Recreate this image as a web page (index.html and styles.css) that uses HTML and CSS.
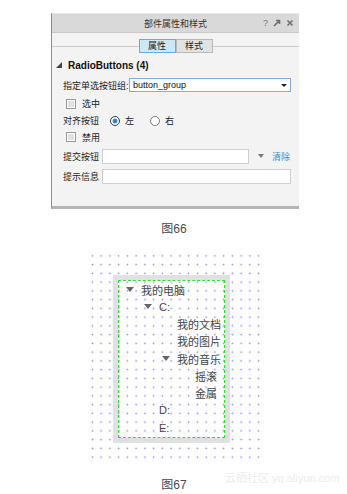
FILE: index.html
```html
<!DOCTYPE html>
<html lang="zh">
<head>
    <meta charset="UTF-8">
    <title>部件属性和样式</title>
    <link rel="stylesheet" href="styles.css">
</head>
<body>
<div class="page">
    <!-- 图66: 属性面板 -->
    <div class="panel">
        <div class="panel-title">
            <span class="title-text">部件属性和样式</span>
            <div class="title-icons">
                <span class="t-help">?</span>
                <svg width="8" height="8" viewBox="0 0 8 8"><path d="M1 7 L6 2 M3 1.5 H6.5 V5" stroke="#6f6f6f" stroke-width="1.6" fill="none"/></svg>
                <svg width="8" height="8" viewBox="0 0 8 8"><path d="M1.5 1.5 L6.5 6.5 M6.5 1.5 L1.5 6.5" stroke="#6f6f6f" stroke-width="1.6" fill="none"/></svg>
            </div>
        </div>

        <div class="tabs">
            <span class="tab active">属性</span>
            <span class="tab">样式</span>
        </div>

        <div class="section-head"><span class="corner"></span>RadioButtons (4)</div>

        <div class="row row-select">
            <span class="label">指定单选按钮组:</span>
            <div class="select">button_group<span class="select-arrow"></span></div>
        </div>

        <div class="row row-check">
            <span class="checkbox"></span><span>选中</span>
        </div>

        <div class="row row-radio">
            <span class="label">对齐按钮</span>
            <span class="radio checked"></span><span class="radio-text">左</span>
            <span class="radio"></span><span class="radio-text">右</span>
        </div>

        <div class="row row-check2">
            <span class="checkbox"></span><span>禁用</span>
        </div>

        <div class="row row-input">
            <span class="label">提交按钮</span>
            <div class="input short"></div>
            <span class="combo-arrow"></span>
            <span class="link">清除</span>
        </div>

        <div class="row row-input">
            <span class="label">提示信息</span>
            <div class="input"></div>
        </div>
    </div>
    <div class="caption cap66">图66</div>

    <!-- 图67: 树形控件 -->
    <div class="canvas">
        <div class="tree-frame">
            <div class="tree">
                <div class="node lv0"><span class="caret open"></span>我的电脑</div>
                <div class="node lv1"><span class="caret open"></span>C:</div>
                <div class="node lv2"><span class="caret"></span>我的文档</div>
                <div class="node lv2"><span class="caret"></span>我的图片</div>
                <div class="node lv2"><span class="caret open"></span>我的音乐</div>
                <div class="node lv3"><span class="caret"></span>摇滚</div>
                <div class="node lv3"><span class="caret"></span>金属</div>
                <div class="node lv1"><span class="caret"></span>D:</div>
                <div class="node lv1"><span class="caret"></span>E:</div>
            </div>
        </div>
    </div>
    <div class="caption cap67">图67</div>
    <div class="watermark">云栖社区 yq.aliyun.com</div>
</div>
</body>
</html>
```

FILE: styles.css
```css
* {
    margin: 0;
    padding: 0;
    box-sizing: border-box;
}

body {
    font-family: 'Liberation Sans', 'Noto Sans CJK SC', sans-serif;
    background: #ffffff;
    color: #333;
}

.page {
    position: relative;
    width: 347px;
    height: 494px;
    padding-top: 13px;
    overflow: hidden;
}

/* 面板 */
.panel {
    width: 248px;
    margin-left: 51px;
    background: #f3f3f3;
    border-left: 1px solid #8c8c8c;
    border-bottom: 3px solid #b4b4b4;
    padding-bottom: 20px;
    font-size: 9px;
    color: #222;
}

.panel-title {
    display: grid;
    grid-template-columns: 1fr auto 1fr;
    align-items: center;
    height: 20px;
    background: #d9d9d9;
    border-top: 1px solid #e9e9e9;
    border-bottom: 1px solid #c9c9c9;
}

.title-text {
    grid-column: 2;
    color: #333;
}

.title-icons {
    justify-self: end;
    display: flex;
    align-items: center;
    gap: 5px;
    padding-right: 5px;
}

.t-help {
    color: #777;
    font-size: 9px;
}

.tabs {
    display: flex;
    justify-content: center;
    margin-top: 6px;
    height: 14px;
    background: linear-gradient(#cccccc, #cccccc) center / 100% 1px no-repeat;
}

.tab {
    width: 37px;
    height: 14px;
    line-height: 12px;
    text-align: center;
    background: #e2e2e2;
    border: 1px solid #b9b9b9;
}

.tab.active {
    background: #cce8f8;
    border-color: #5fb0e6;
}

.section-head {
    display: flex;
    align-items: center;
    height: 14px;
    margin-top: 5px;
    padding-left: 4px;
    font-size: 10px;
    font-weight: bold;
    color: #111;
}

.corner {
    width: 0;
    height: 0;
    border-left: 6px solid transparent;
    border-bottom: 6px solid #444;
    margin-right: 6px;
}

.row {
    display: flex;
    align-items: center;
    padding-left: 11px;
    padding-right: 8px;
}

.label {
    color: #222;
}

.row-select {
    margin-top: 4px;
    height: 18px;
}

.row-select .label {
    width: 66px;
}

.select {
    position: relative;
    flex: 1;
    height: 14px;
    line-height: 12px;
    padding-left: 3px;
    background: #fff;
    border: 1px solid #86acd8;
    color: #111;
}

.select-arrow {
    position: absolute;
    right: 3px;
    top: 5px;
    border-left: 3px solid transparent;
    border-right: 3px solid transparent;
    border-top: 3px solid #222;
}

.row-check {
    height: 19px;
    padding-left: 14px;
}

.row-check2 {
    height: 18px;
    padding-left: 14px;
}

.checkbox {
    width: 10px;
    height: 10px;
    margin-right: 6px;
    border: 1px solid #9a9a9a;
    background: #fff;
    box-shadow: inset 0 0 0 1px #fff, inset 0 0 0 4px #e2e2e2;
}

.row-radio {
    height: 15px;
}

.row-radio .label {
    width: 47px;
}

.radio {
    width: 10px;
    height: 10px;
    border-radius: 50%;
    border: 1px solid #7a7a7a;
    background: #fff;
    margin-right: 5px;
}

.radio.checked {
    border-color: #3a3a3a;
    background: radial-gradient(circle, #1e6fc8 0, #3f95e0 2.2px, #fff 2.8px);
}

.radio-text {
    margin-right: 16px;
}

.row-input {
    height: 20px;
}

.row-input .label {
    width: 39px;
}

.input {
    flex: 1;
    height: 15px;
    background: #fff;
    border: 1px solid #cfcfcf;
}

.input.short {
    flex: none;
    width: 147px;
}

.combo-arrow {
    margin-left: 9px;
    border-left: 3.5px solid transparent;
    border-right: 3.5px solid transparent;
    border-top: 4px solid #777;
}

.link {
    margin-left: 8px;
    color: #3a8fd6;
}

.caption {
    text-align: center;
    font-size: 12px;
    line-height: 16px;
    color: #4a4a4a;
    padding-left: 1px;
}

.cap66 {
    margin-top: 12px;
}

.cap67 {
    margin-top: 15px;
}

/* 点阵画布 */
.canvas {
    width: 174px;
    height: 210px;
    margin: 15px 0 0 88px;
    padding: 23px 0 0 25px;
    background-image: radial-gradient(circle, #8585f2 0.7px, transparent 1.1px);
    background-size: 8.75px 8.75px;
    background-position: 0 -0.5px;
}

.tree-frame {
    width: 117px;
    height: 168px;
    border: 5px solid rgba(222, 222, 222, 0.9);
}

.tree {
    height: 100%;
    border: 1px dashed #30e030;
    font-size: 11px;
    color: #444;
}

.node {
    display: flex;
    align-items: center;
    height: 17.25px;
    white-space: nowrap;
}

.lv0 { padding-left: 3px; }
.lv1 { padding-left: 21px; }
.lv2 { padding-left: 39px; }
.lv3 { padding-left: 57px; }

.caret {
    width: 19px;
    display: flex;
    align-items: center;
}

.caret.open::before {
    content: '';
    margin-left: 4px;
    border-left: 4px solid transparent;
    border-right: 4px solid transparent;
    border-top: 5px solid #666;
}

.watermark {
    position: absolute;
    left: 225px;
    top: 469px;
    font-size: 11px;
    color: #ececec;
    white-space: nowrap;
}
```
